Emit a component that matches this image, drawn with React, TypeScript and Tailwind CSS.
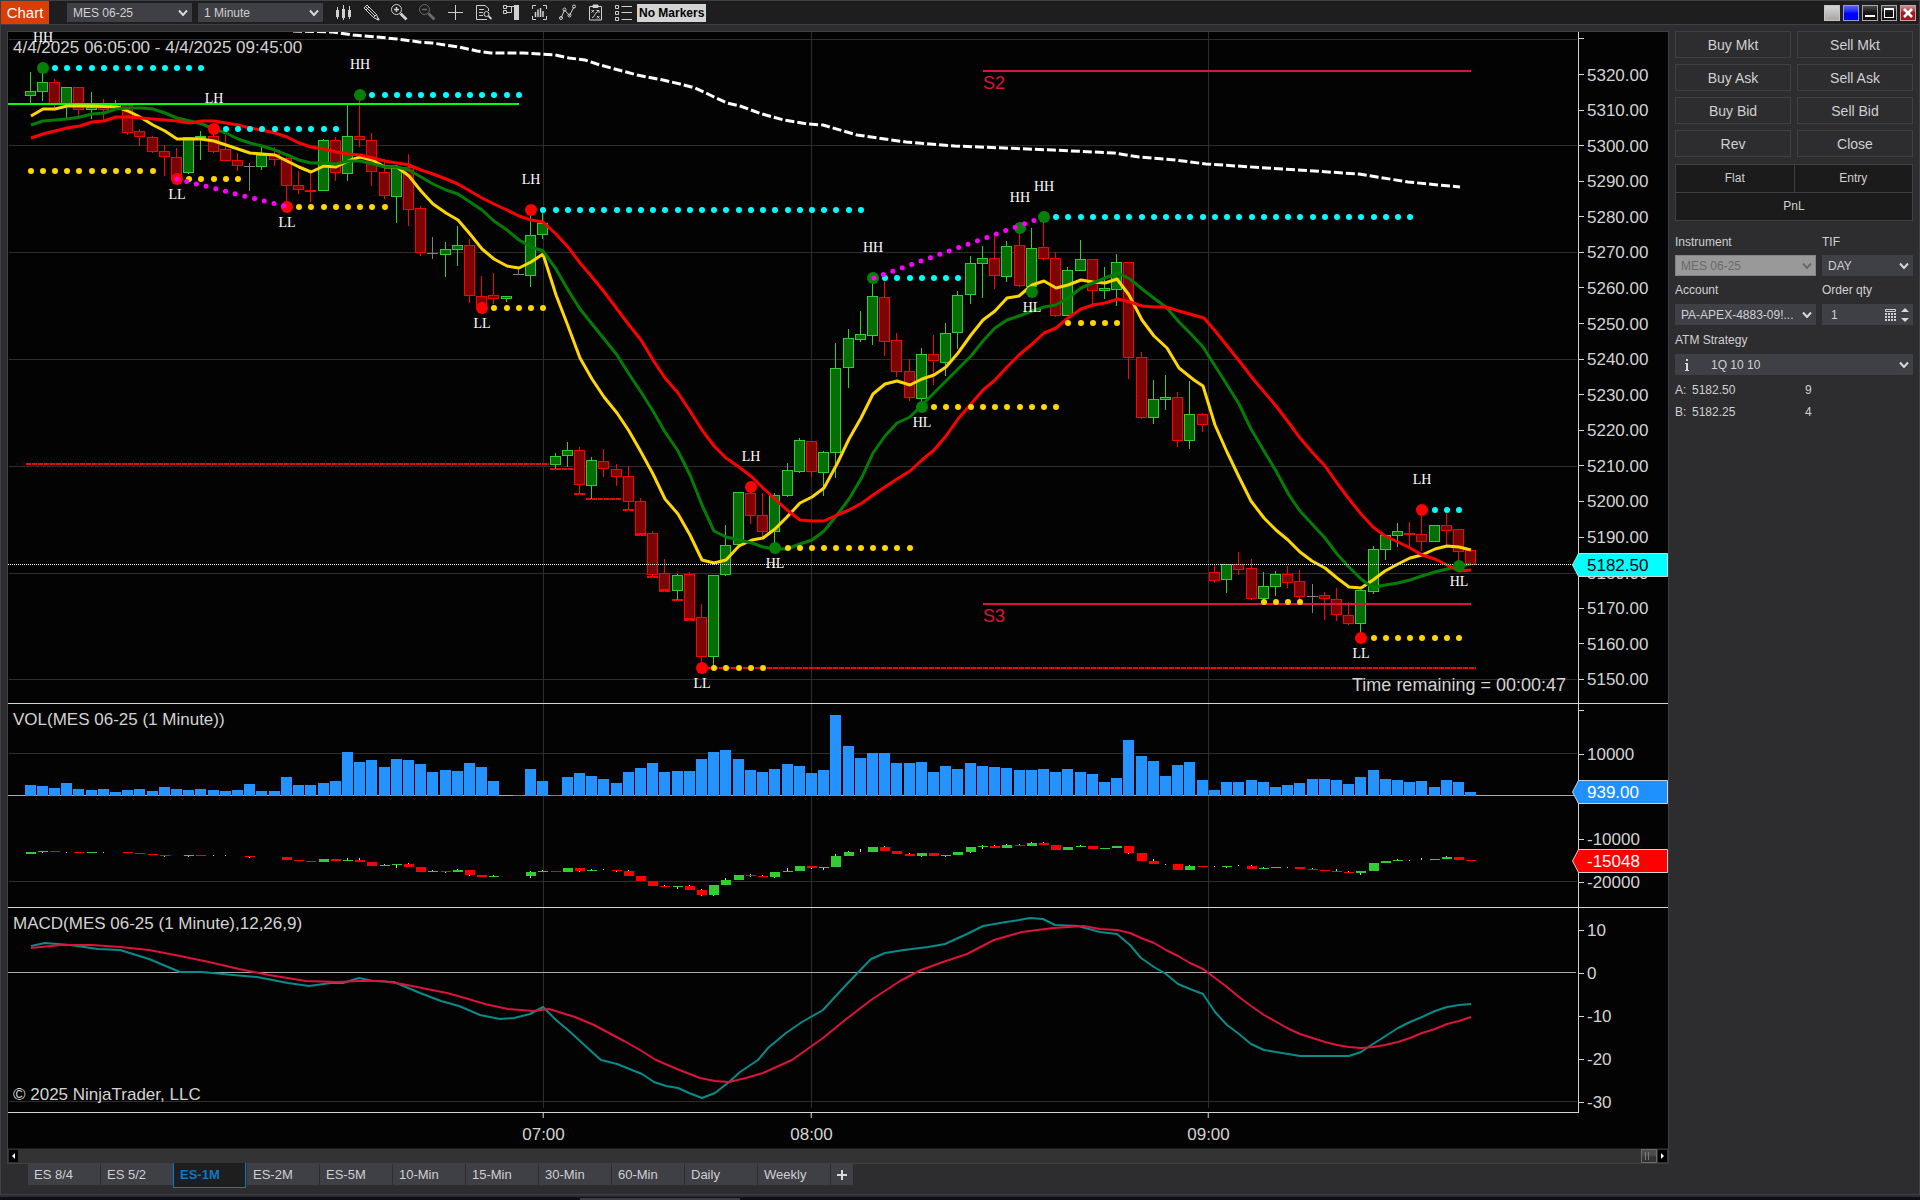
import type { ReactNode } from 'react';

type Candle = [number, 'G' | 'R' | 'D', number, number, number, number];

/* Plot geometry shared by the three stacked panels. */
const PLOT_LEFT = 8;
const PLOT_WIDTH = 1570;
const barX = (i: number) => Math.floor(30 + 12.21 * i);

const UP = '#32cd32';
const DOWN = '#ff0000';
const GRID = '#2d2d2d';
const TIME_LINES = [543, 811, 1208];

/* index, direction, high, body top, body bottom, low */
const CANDLES: Candle[] = [
  [0, 'G', 72, 91, 96, 103], [1, 'G', 68, 82, 92, 101], [2, 'R', 79, 82, 104, 111], [3, 'G', 87, 87, 104, 120],
  [4, 'R', 87, 87, 110, 119], [5, 'G', 92, 107, 110, 119], [6, 'R', 99, 106, 110, 122], [7, 'G', 100, 104, 107, 110],
  [8, 'R', 105, 105, 133, 135], [9, 'R', 129, 131, 137, 146], [10, 'R', 136, 137, 152, 153], [11, 'R', 145, 151, 157, 176],
  [12, 'R', 148, 157, 179, 179], [13, 'G', 137, 137, 173, 174], [14, 'G', 131, 136, 138, 160], [15, 'R', 133, 136, 152, 153],
  [16, 'R', 135, 149, 161, 161], [17, 'R', 153, 160, 166, 171], [18, 'D', 163, 166, 167, 191], [19, 'G', 147, 155, 167, 170],
  [20, 'R', 147, 154, 160, 166], [21, 'R', 157, 158, 186, 206], [22, 'R', 171, 185, 190, 194], [23, 'R', 173, 190, 192, 202],
  [24, 'G', 139, 140, 191, 191], [25, 'R', 137, 140, 173, 181], [26, 'G', 104, 136, 174, 181], [27, 'R', 98, 136, 140, 147],
  [28, 'R', 133, 140, 172, 186], [29, 'R', 159, 172, 196, 199], [30, 'G', 165, 167, 197, 223], [31, 'R', 154, 167, 210, 226],
  [32, 'R', 206, 208, 253, 256], [33, 'D', 237, 253, 254, 259], [34, 'G', 242, 249, 255, 277], [35, 'G', 226, 245, 250, 266],
  [36, 'R', 239, 245, 296, 303], [37, 'R', 276, 296, 306, 307], [38, 'R', 273, 295, 299, 304], [39, 'G', 296, 296, 299, 302],
  [40, 'D', 268, 274, 275, 275], [41, 'G', 212, 235, 276, 287], [42, 'G', 212, 223, 235, 239], [43, 'G', 453, 456, 465, 469],
  [44, 'G', 442, 450, 456, 467], [45, 'R', 447, 450, 485, 494], [46, 'G', 457, 460, 486, 499], [47, 'R', 449, 461, 469, 477],
  [48, 'R', 464, 469, 477, 486], [49, 'R', 466, 476, 502, 510], [50, 'R', 498, 501, 534, 535], [51, 'R', 531, 533, 575, 577],
  [52, 'R', 559, 573, 590, 591], [53, 'G', 574, 575, 591, 600], [54, 'R', 572, 574, 619, 620], [55, 'R', 604, 617, 657, 668],
  [56, 'G', 575, 575, 657, 667], [57, 'G', 525, 545, 575, 576], [58, 'G', 492, 492, 545, 545], [59, 'R', 487, 493, 516, 524],
  [60, 'R', 493, 515, 532, 537], [61, 'G', 493, 495, 532, 548], [62, 'G', 463, 470, 496, 497], [63, 'G', 438, 440, 472, 473],
  [64, 'R', 441, 441, 472, 477], [65, 'G', 451, 452, 473, 496], [66, 'G', 343, 368, 453, 478], [67, 'G', 329, 338, 368, 388],
  [68, 'G', 311, 334, 340, 342], [69, 'G', 278, 296, 336, 345], [70, 'R', 280, 297, 342, 356], [71, 'R', 333, 340, 372, 377],
  [72, 'R', 359, 371, 398, 401], [73, 'G', 348, 354, 399, 406], [74, 'R', 335, 354, 361, 385], [75, 'G', 323, 333, 363, 376],
  [76, 'G', 291, 295, 333, 349], [77, 'G', 256, 263, 295, 304], [78, 'G', 246, 258, 264, 298], [79, 'R', 236, 258, 276, 289],
  [80, 'G', 241, 246, 277, 282], [81, 'R', 230, 245, 286, 287], [82, 'G', 228, 248, 287, 290], [83, 'R', 220, 247, 259, 260],
  [84, 'R', 252, 258, 316, 317], [85, 'G', 267, 270, 316, 316], [86, 'G', 240, 259, 271, 271], [87, 'R', 259, 259, 291, 304],
  [88, 'G', 267, 288, 291, 299], [89, 'G', 254, 262, 290, 306], [90, 'R', 262, 262, 358, 379], [91, 'R', 352, 357, 418, 419],
  [92, 'G', 380, 399, 418, 424], [93, 'G', 375, 397, 400, 410], [94, 'R', 392, 397, 441, 447], [95, 'G', 381, 414, 441, 449],
  [96, 'R', 413, 414, 425, 432], [97, 'R', 565, 572, 581, 583], [98, 'G', 564, 564, 580, 593], [99, 'R', 552, 564, 570, 575],
  [100, 'R', 559, 568, 599, 600], [101, 'G', 572, 586, 599, 602], [102, 'G', 571, 574, 587, 596], [103, 'R', 566, 574, 583, 588],
  [104, 'R', 570, 581, 597, 601], [105, 'D', 584, 596, 597, 613], [106, 'R', 592, 595, 599, 620], [107, 'R', 588, 599, 615, 621],
  [108, 'R', 602, 615, 624, 625], [109, 'G', 590, 590, 624, 633], [110, 'G', 546, 549, 592, 594], [111, 'G', 535, 535, 550, 560],
  [112, 'G', 523, 531, 536, 547], [113, 'R', 522, 533, 535, 547], [114, 'R', 510, 534, 542, 551], [115, 'G', 525, 525, 542, 542],
  [116, 'R', 513, 525, 531, 547], [117, 'R', 529, 529, 552, 567], [118, 'R', 550, 550, 565, 565],
];

const VOLUME = [
  11, 10, 8, 13, 7, 6, 7, 4, 6, 7, 5, 9, 7, 6, 7, 6, 5, 6, 12, 5, 5, 19, 11, 11, 13, 15, 44, 34, 36, 29,
  37, 36, 32, 24, 26, 25, 33, 29, 15, 0, 1, 27, 15, 1, 19, 23, 20, 17, 13, 24, 28, 33, 24, 25, 25, 37, 44, 46, 37, 26,
  24, 27, 32, 30, 23, 26, 81, 50, 38, 43, 43, 33, 33, 34, 24, 30, 27, 33, 30, 29, 28, 26, 26, 27, 24, 27, 24, 22, 14, 18,
  56, 40, 35, 20, 31, 34, 16, 6, 14, 14, 16, 14, 9, 11, 13, 17, 17, 16, 12, 19, 26, 17, 16, 14, 15, 9, 16, 14, 4,
];

/* index, direction, high, body top, body bottom, low */
const DELTA: Candle[] = [
  [0, 'G', 852, 852, 854, 854], [1, 'G', 851, 851, 852, 853], [2, 'R', 851, 851, 852, 852], [3, 'D', 852, 0, 0, 853],
  [4, 'R', 852, 852, 853, 853], [5, 'G', 852, 852, 853, 853], [6, 'D', 852, 0, 0, 853], [8, 'R', 852, 852, 853, 853],
  [9, 'R', 853, 853, 854, 854], [10, 'R', 854, 854, 855, 855], [11, 'R', 855, 855, 856, 857], [13, 'G', 855, 855, 856, 857],
  [14, 'R', 855, 855, 856, 856], [15, 'D', 855, 0, 0, 856], [16, 'D', 855, 0, 0, 856], [18, 'R', 856, 856, 857, 858],
  [21, 'R', 857, 857, 860, 860], [22, 'R', 860, 860, 861, 861], [23, 'R', 861, 861, 862, 862], [24, 'G', 859, 859, 862, 862],
  [25, 'R', 859, 859, 861, 861], [26, 'G', 858, 860, 861, 861], [27, 'R', 858, 860, 862, 862], [28, 'R', 862, 862, 866, 866],
  [29, 'G', 864, 865, 866, 866], [30, 'G', 864, 864, 865, 868], [31, 'R', 863, 864, 867, 867], [32, 'R', 867, 867, 872, 872],
  [33, 'G', 870, 871, 872, 872], [34, 'R', 871, 871, 872, 873], [35, 'G', 869, 870, 872, 872], [36, 'R', 870, 870, 875, 876],
  [37, 'R', 875, 875, 877, 877], [38, 'G', 875, 876, 877, 877], [41, 'G', 871, 872, 876, 878], [42, 'G', 870, 871, 872, 872],
  [43, 'R', 871, 871, 872, 872], [44, 'G', 868, 868, 872, 872], [45, 'R', 868, 868, 871, 872], [46, 'G', 869, 870, 871, 871],
  [47, 'D', 869, 0, 0, 870], [48, 'R', 870, 870, 871, 872], [49, 'R', 870, 871, 876, 876], [50, 'R', 876, 876, 881, 881],
  [51, 'R', 881, 881, 886, 886], [52, 'R', 885, 886, 887, 887], [53, 'G', 886, 886, 887, 889], [54, 'R', 885, 886, 890, 890],
  [55, 'R', 889, 890, 895, 896], [56, 'G', 885, 885, 895, 896], [57, 'G', 878, 880, 885, 885], [58, 'G', 875, 875, 880, 880],
  [59, 'R', 874, 875, 876, 877], [60, 'R', 875, 876, 877, 877], [61, 'G', 872, 872, 877, 878], [62, 'G', 868, 871, 872, 872],
  [63, 'G', 866, 866, 871, 871], [64, 'R', 866, 866, 868, 869], [65, 'G', 867, 867, 868, 870], [66, 'G', 854, 856, 867, 867],
  [67, 'G', 851, 852, 856, 856], [68, 'D', 849, 0, 0, 852], [69, 'G', 847, 847, 852, 852], [70, 'R', 846, 847, 851, 851],
  [71, 'R', 851, 851, 854, 854], [72, 'R', 853, 854, 856, 856], [73, 'G', 853, 853, 856, 857], [74, 'R', 853, 853, 856, 856],
  [75, 'G', 855, 855, 856, 857], [76, 'G', 852, 852, 855, 855], [77, 'G', 847, 847, 852, 853], [78, 'G', 845, 846, 847, 849],
  [79, 'R', 845, 846, 848, 848], [80, 'G', 844, 845, 848, 848], [81, 'R', 844, 845, 846, 846], [82, 'G', 842, 843, 846, 846],
  [83, 'R', 842, 843, 845, 845], [84, 'R', 845, 845, 850, 850], [85, 'G', 847, 847, 850, 850], [86, 'G', 845, 846, 847, 847],
  [87, 'R', 846, 846, 849, 849], [88, 'G', 848, 848, 849, 849], [89, 'G', 846, 846, 848, 848], [90, 'R', 846, 846, 853, 854],
  [91, 'R', 853, 853, 861, 861], [92, 'R', 859, 861, 864, 864], [93, 'D', 864, 0, 0, 865], [94, 'R', 864, 864, 870, 870],
  [95, 'G', 865, 866, 870, 870], [96, 'R', 866, 866, 867, 867], [97, 'D', 866, 0, 0, 867], [98, 'G', 866, 866, 867, 868],
  [99, 'D', 865, 0, 0, 866], [100, 'R', 865, 866, 869, 869], [101, 'G', 867, 868, 869, 869], [102, 'G', 867, 867, 868, 868],
  [103, 'D', 867, 0, 0, 868], [104, 'R', 867, 867, 869, 869], [105, 'R', 868, 869, 870, 870], [106, 'R', 870, 870, 871, 871],
  [107, 'R', 869, 871, 872, 872], [108, 'R', 871, 872, 873, 873], [109, 'G', 871, 871, 873, 875], [110, 'G', 863, 863, 871, 871],
  [111, 'G', 861, 861, 863, 863], [112, 'G', 859, 860, 861, 861], [113, 'D', 860, 0, 0, 861], [114, 'D', 858, 0, 0, 860],
  [115, 'G', 859, 859, 860, 860], [116, 'G', 856, 857, 859, 859], [117, 'R', 857, 857, 860, 860], [118, 'R', 860, 860, 861, 861],
];

const FAST_MA =
  '31,116 43,109 55,109 67,106 91,106 117,107 128,111 140,117 153,125 165,131 177,139 189,139 201,139 214,141 226,145 238,149 250,153 262,154 275,155 287,161 299,167 311,172 324,166 336,167 348,161 360,157 372,160 385,167 397,167 409,176 421,191 433,204 446,213 458,220 470,234 482,249 494,259 507,266 519,268 531,262 543,254 556,295 568,326 580,358 592,379 604,397 617,413 629,431 641,452 653,474 665,499 678,514 690,535 702,560 714,563 726,560 739,546 752,540 763,538 775,529 787,517 800,503 812,497 824,488 837,464 849,439 861,418 873,394 885,384 897,381 910,385 922,379 934,375 946,367 958,353 971,335 983,320 995,311 1007,298 1019,296 1032,285 1044,281 1056,288 1068,285 1081,280 1093,282 1105,283 1117,279 1129,295 1142,320 1154,336 1167,348 1179,368 1194,380 1203,386 1215,425 1227,452 1239,477 1251,501 1264,518 1276,530 1288,540 1300,552 1312,561 1325,568 1337,578 1349,587 1361,588 1373,580 1385,571 1398,564 1410,558 1422,555 1435,549 1447,546 1459,547 1471,550';
const MID_MA =
  '31,125 43,121 67,119 80,117 92,114 104,113 116,109 128,108 140,108 153,109 165,113 177,118 190,121 202,124 214,129 226,133 238,139 250,143 262,146 275,150 287,155 299,160 311,163 324,163 336,164 348,161 360,161 373,164 385,167 397,167 409,170 421,177 433,184 446,190 458,194 470,202 482,210 494,221 507,230 519,240 531,247 543,251 556,269 568,290 580,309 592,324 605,340 617,355 629,374 641,392 653,411 665,432 678,451 690,475 702,505 714,531 726,537 739,540 752,543 763,547 775,549 787,549 800,544 812,540 824,531 837,515 849,499 862,477 873,453 885,436 897,423 910,417 922,405 934,393 946,381 958,369 971,356 983,341 995,328 1007,320 1019,316 1032,311 1044,307 1056,305 1068,298 1081,288 1093,283 1105,278 1118,273 1130,279 1142,289 1155,299 1166,307 1179,322 1191,334 1203,347 1224,380 1239,404 1251,429 1264,451 1276,471 1289,495 1300,511 1312,524 1325,538 1337,554 1349,567 1361,579 1373,588 1385,585 1398,583 1410,580 1422,576 1435,572 1447,569 1459,566 1471,564';
const SLOW_MA =
  '31,138 43,134 55,131 67,128 80,126 92,122 104,121 116,117 128,117 153,119 177,121 189,123 202,121 214,121 226,123 238,125 250,128 262,130 275,133 287,137 299,143 311,147 324,149 336,152 348,154 360,155 373,158 385,161 409,165 421,170 433,174 446,179 458,184 470,191 482,198 494,204 507,210 519,216 531,220 543,222 556,234 568,247 580,263 592,277 605,293 617,309 629,325 641,340 653,360 665,378 678,393 690,411 702,430 714,446 726,458 739,467 752,477 763,488 775,499 787,510 800,520 812,521 824,521 837,515 849,510 862,503 873,495 885,487 897,479 910,471 922,460 934,450 946,436 958,419 971,404 983,390 995,380 1007,367 1019,355 1032,344 1044,333 1056,328 1068,318 1081,309 1093,305 1105,303 1118,299 1130,302 1142,306 1154,307 1166,307 1179,311 1204,318 1216,332 1228,347 1240,362 1254,380 1276,406 1289,423 1300,438 1312,452 1325,466 1337,483 1349,499 1361,514 1373,527 1385,536 1398,542 1410,548 1422,555 1435,559 1447,565 1459,571 1471,570';
const LONG_MA =
  '293,31 333,32 353,35 377,37 397,39 419,42 432,43 459,47 477,51 491,53 523,53 555,55 569,58 585,60 600,65 637,75 663,80 680,84 695,88 710,95 727,103 740,106 762,114 784,120 808,124 823,125 857,135 906,142 955,146 1004,148 1053,150 1114,153 1139,157 1175,160 1206,164 1298,170 1359,174 1408,182 1460,187';
const MACD =
  '31,946 45,943 70,945 98,949 120,950 149,959 180,972 202,972 233,975 257,977 288,983 309,986 331,983 343,983 359,978 373,981 394,982 420,993 441,1001 459,1006 480,1015 500,1019 514,1018 530,1014 543,1007 556,1020 568,1030 580,1041 592,1052 601,1060 617,1064 642,1074 654,1082 666,1086 678,1088 689,1093 702,1098 715,1093 729,1082 740,1072 758,1060 768,1048 786,1033 802,1022 823,1010 845,986 871,959 885,953 904,950 928,947 945,944 967,934 983,926 1006,922 1019,920 1030,918 1043,919 1055,925 1078,926 1100,932 1117,934 1130,945 1141,958 1154,967 1166,974 1178,984 1190,989 1203,994 1215,1012 1227,1025 1239,1034 1251,1044 1264,1050 1300,1056 1349,1056 1361,1052 1373,1044 1398,1028 1410,1022 1422,1017 1435,1011 1447,1007 1459,1005 1471,1004';
const SIGNAL =
  '31,948 61,945 92,945 120,947 149,950 180,956 209,962 239,969 269,975 306,981 337,982 359,981 382,981 402,984 422,988 447,993 465,998 485,1004 508,1009 533,1011 549,1009 575,1017 594,1025 624,1041 640,1050 656,1060 677,1069 700,1078 715,1081 729,1082 746,1078 763,1073 792,1060 823,1038 845,1020 871,1000 900,981 921,970 943,962 967,954 994,940 1022,932 1053,928 1084,926 1100,929 1117,930 1130,933 1141,938 1154,943 1166,950 1178,956 1190,963 1203,969 1215,978 1227,987 1239,997 1251,1006 1264,1015 1289,1029 1300,1034 1325,1042 1337,1045 1349,1047 1361,1048 1373,1047 1385,1045 1398,1042 1410,1038 1422,1033 1435,1029 1447,1024 1459,1021 1471,1017';

/* first bar, last bar, y, colour */
const DOT_ROWS: [number, number, number, string][] = [
  [2, 14, 68, '#00ffff'], [0, 10, 171, '#ffd700'], [16, 25, 129, '#00ffff'], [13, 17, 179, '#ffd700'],
  [22, 29, 207, '#ffd700'], [28, 40, 95, '#00ffff'], [38, 42, 308, '#ffd700'], [42, 68, 210, '#00ffff'],
  [62, 72, 548, '#ffd700'], [56, 60, 668, '#ffd700'], [70, 76, 278, '#00ffff'], [74, 84, 407, '#ffd700'],
  [84, 113, 217, '#00ffff'], [85, 89, 323, '#ffd700'], [101, 104, 602, '#ffd700'], [115, 117, 510, '#00ffff'],
  [110, 117, 638, '#ffd700'],
];

/* bar, dot y, label y, label */
const SWINGS: [number, number, number, string, 'G' | 'R'][] = [
  [1, 68, 38, 'HH', 'G'], [15, 129, 99, 'LH', 'R'], [12, 179, 195, 'LL', 'R'], [21, 207, 223, 'LL', 'R'],
  [27, 95, 65, 'HH', 'G'], [37, 308, 324, 'LL', 'R'], [41, 210, 180, 'LH', 'R'], [55, 668, 684, 'LL', 'R'],
  [59, 487, 457, 'LH', 'R'], [61, 548, 564, 'HL', 'G'], [69, 278, 248, 'HH', 'G'], [73, 407, 423, 'HL', 'G'],
  [81, 228, 198, 'HH', 'G'], [82, 292, 308, 'HL', 'G'], [83, 217, 187, 'HH', 'G'], [109, 638, 654, 'LL', 'R'],
  [114, 510, 480, 'LH', 'R'], [117, 566, 582, 'HL', 'G'],
];

/* x start, x end, y of the running session low */
const LOW_STEPS: [number, number, number][] = [
  [26, 549, 464], [550, 573, 469], [574, 585, 494], [586, 622, 499], [623, 634, 510], [635, 646, 535],
  [647, 658, 577], [659, 670, 591], [672, 683, 600], [684, 695, 620], [701, 1476, 668],
];

const PRICES = Array.from({ length: 18 }, (_, k) => 5320 - k * 10);
const priceY = (p: number) => 74.5 + (5320 - p) * 3.558;

const pct = (v: number, from: number, size: number) => `${((v - from) / size) * 100}%`;

type PanelProps = {
  top: number;
  height: number;
  name: string;
  ticks: { y: number; label?: string }[];
  overlay?: ReactNode;
  tags?: ReactNode;
  children: ReactNode;
};

function Panel({ top, height, name, ticks, overlay, tags, children }: PanelProps) {
  return (
    <section className="flex min-h-0" aria-label={name}>
      <div className="relative min-w-0 flex-1 overflow-hidden">
        <svg
          className="block h-full w-full"
          viewBox={`${PLOT_LEFT} ${top} ${PLOT_WIDTH} ${height}`}
          preserveAspectRatio="none"
          role="img"
          aria-label={name}
        >
          {children}
        </svg>
        {overlay}
      </div>
      <div className="relative w-[90px] shrink-0 border-l border-[#d3d3d3] text-[17px] leading-5 text-[#d3d3d3]">
        {ticks.map((t) => (
          <div
            key={t.y}
            className="absolute left-0 flex -translate-y-1/2 items-center"
            style={{ top: pct(t.y, top, height) }}
          >
            <span className="h-px w-[5px] bg-[#d3d3d3]" />
            <span className="mt-0.5 ml-[3px] h-5">{t.label}</span>
          </div>
        ))}
        {tags}
      </div>
    </section>
  );
}

function PriceTag({ top, fill, text, className }: { top: string; fill: string; text: string; className: string }) {
  return (
    <div className="absolute -left-[7px] right-0 h-6 -translate-y-1/2" style={{ top }}>
      <svg className="block h-6 w-full" viewBox="0 0 96 24" preserveAspectRatio="none">
        <path d="M0.5 12 6.5 0.5H95.5V23.5H6.5Z" fill={fill} stroke="#d3d3d3" />
      </svg>
      <span className={className}>{text}</span>
    </div>
  );
}

function VerticalGrid({ y1, y2 }: { y1: number; y2: number }) {
  return (
    <>
      {TIME_LINES.map((x) => (
        <rect key={x} x={x} y={y1} width="1" height={y2 - y1} fill={GRID} />
      ))}
    </>
  );
}

function PricePanel() {
  const top = 32;
  const height = 671;
  return (
    <Panel
      top={top}
      height={height}
      name="MES 06-25 price"
      ticks={[{ y: 39 }, ...PRICES.map((p) => ({ y: priceY(p), label: p.toFixed(2) }))]}
      tags={
        <PriceTag
          top={pct(565, top, height)}
          fill="#00ffff"
          text="5182.50"
          className="absolute left-[15px] top-[3px] text-black"
        />
      }
      overlay={
        <>
          <p className="absolute left-[5px] top-1.5 text-[17px] leading-5 text-[#d3d3d3]">
            4/4/2025 06:05:00 - 4/4/2025 09:45:00
          </p>
          <p className="absolute bottom-2 right-3 text-lg leading-5 text-[#d3d3d3]">Time remaining = 00:00:47</p>
          {[
            ['S2', 83],
            ['S3', 616],
          ].map(([t, y]) => (
            <span
              key={t}
              className="absolute -translate-y-1/2 text-lg leading-5 text-[#dc143c]"
              style={{ left: pct(983, PLOT_LEFT, PLOT_WIDTH), top: pct(Number(y), top, height) }}
            >
              {t}
            </span>
          ))}
          {SWINGS.map(([i, , y, label]) => (
            <span
              key={i}
              className="absolute -translate-x-1/2 -translate-y-1/2 font-['Liberation_Serif',serif] text-sm leading-4 text-white"
              style={{ left: pct(barX(i) + 1, PLOT_LEFT, PLOT_WIDTH), top: pct(y, top, height) }}
            >
              {label}
            </span>
          ))}
        </>
      }
    >
      {[39, 145, 252, 359, 466, 573, 679].map((y) => (
        <rect key={y} x="9" y={y} width="1568" height="1" fill={GRID} />
      ))}
      <VerticalGrid y1={32} y2={703} />
      {CANDLES.map(([i, kind, high, t, b, low]) => {
        const x = barX(i);
        const line = kind === 'G' ? UP : kind === 'R' ? DOWN : '#808080';
        const fill = kind === 'G' ? '#066e06' : '#7b0404';
        return (
          <g key={i}>
            <rect x={x} y={high} width="1" height={Math.max(low - high, 1)} fill={line} />
            {b - t > 2 ? (
              <rect x={x - 4.5} y={t + 0.5} width="10" height={b - t - 1} fill={fill} stroke={line} />
            ) : (
              <rect x={x - 5} y={t} width="11" height={b - t} fill={line} />
            )}
          </g>
        );
      })}
      {LOW_STEPS.map(([x1, x2, y]) => (
        <line key={y} x1={x1} x2={x2} y1={y} y2={y} stroke={DOWN} strokeWidth="2" strokeDasharray="5 1" />
      ))}
      <rect x="8" y="103" width="511" height="2" fill="#00ff00" />
      <polyline points={LONG_MA} fill="none" stroke="#fff" strokeWidth="3" strokeDasharray="9 3" />
      <polyline points={FAST_MA} fill="none" stroke="#ffd700" strokeWidth="3" strokeLinejoin="round" />
      <polyline points={MID_MA} fill="none" stroke="#047d04" strokeWidth="3" strokeLinejoin="round" />
      <polyline points={SLOW_MA} fill="none" stroke="#ff0000" strokeWidth="3" strokeLinejoin="round" />
      <rect x="983" y="70" width="488" height="2" fill="#dc143c" />
      <rect x="983" y="603" width="488" height="2" fill="#dc143c" />
      <line x1="8" x2="1573" y1="564.5" y2="564.5" stroke="#fff" strokeDasharray="1 1" />
      {DOT_ROWS.map(([from, to, y, color]) =>
        Array.from({ length: to - from + 1 }, (_, k) => (
          <circle key={`${y}-${from + k}`} cx={barX(from + k) + 1} cy={y} r="3" fill={color} />
        )),
      )}
      {SWINGS.map(([i, y, , , kind]) => (
        <circle key={i} cx={barX(i) + 1} cy={y} r="6" fill={kind === 'G' ? '#067f06' : DOWN} />
      ))}
      <g fill="none" stroke="#ff00ff" strokeWidth="5" strokeLinecap="round" strokeDasharray="0 10">
        <path d="M177 179 284 206" />
        <path d="M874 278 1038 219" />
      </g>
    </Panel>
  );
}

function VolumePanel() {
  const top = 704;
  const height = 203;
  return (
    <Panel
      top={top}
      height={height}
      name="Volume"
      ticks={[{ y: 710 }, { y: 754, label: '10000' }, { y: 839, label: '-10000' }, { y: 882, label: '-20000' }]}
      tags={
        <>
          <PriceTag
            top={pct(792, top, height)}
            fill="#1e90ff"
            text="939.00"
            className="absolute left-[15px] top-[3px] text-white"
          />
          <PriceTag
            top={pct(861, top, height)}
            fill="#ff0000"
            text="-15048"
            className="absolute left-[15px] top-[3px] text-white"
          />
        </>
      }
      overlay={
        <p className="absolute left-[5px] top-1.5 text-[17px] leading-5 text-[#d3d3d3]">VOL(MES 06-25 (1 Minute))</p>
      }
    >
      <rect x="9" y="753" width="1568" height="1" fill={GRID} />
      <rect x="9" y="881" width="1568" height="1" fill={GRID} />
      <VerticalGrid y1={704} y2={907} />
      <rect x="8" y="795" width="1569" height="1" fill="#a9a9a9" />
      {VOLUME.map((h, i) => (
        <rect key={i} x={barX(i) - 5} y={796 - h} width="11" height={h} fill="#2492ff" />
      ))}
      {DELTA.map(([i, kind, high, t, b, low]) => (
        <g key={i}>
          <rect x={barX(i)} y={high} width="1" height={low - high} fill="#d3d3d3" />
          {b > t && <rect x={barX(i) - 4} y={t} width="10" height={b - t} fill={kind === 'G' ? UP : DOWN} />}
        </g>
      ))}
    </Panel>
  );
}

function MacdPanel() {
  return (
    <Panel
      top={908}
      height={204}
      name="MACD"
      ticks={[
        { y: 930, label: '10' },
        { y: 973, label: '0' },
        { y: 1016, label: '-10' },
        { y: 1059, label: '-20' },
        { y: 1102, label: '-30' },
      ]}
      overlay={
        <>
          <p className="absolute left-[5px] top-1.5 text-[17px] leading-5 text-[#d3d3d3]">
            MACD(MES 06-25 (1 Minute),12,26,9)
          </p>
          <p className="absolute bottom-[7px] left-[5px] text-[17px] leading-5 text-[#d3d3d3]">
            © 2025 NinjaTrader, LLC
          </p>
        </>
      }
    >
      <rect x="9" y="1101" width="1568" height="1" fill={GRID} />
      <VerticalGrid y1={908} y2={1108} />
      <rect x="8" y="972" width="1568" height="1" fill="#a9a9a9" />
      <polyline points={MACD} fill="none" stroke="#078b8b" strokeWidth="2" strokeLinejoin="round" />
      <polyline points={SIGNAL} fill="none" stroke="#dc143c" strokeWidth="2" strokeLinejoin="round" />
    </Panel>
  );
}

function TimeAxis() {
  const labels: [string, number][] = [
    ['07:00', 543],
    ['08:00', 811],
    ['09:00', 1208],
  ];
  return (
    <div className="relative mr-[90px] text-[17px] leading-5 text-[#d3d3d3]">
      {labels.map(([t, x]) => (
        <div
          key={t}
          className="absolute top-0 flex -translate-x-1/2 flex-col items-center gap-[7px]"
          style={{ left: pct(x + 0.5, PLOT_LEFT, PLOT_WIDTH) }}
        >
          <span className="h-[5px] w-px bg-[#d3d3d3]" />
          <span>{t}</span>
        </div>
      ))}
    </div>
  );
}

function ScrollStrip() {
  return (
    <div className="flex items-center border-t border-[#1c1c1c] bg-[#333333] px-px">
      <button type="button" aria-label="Scroll left" className="grid h-3 w-[9px] place-items-center bg-black">
        <svg width="5" height="6" viewBox="0 0 5 6">
          <path d="M4 0v6L1 3z" fill="#fff" />
        </svg>
      </button>
      <div className="flex-1" />
      <div className="mr-px flex h-3.5 w-4 items-center gap-0.5 border border-[#6a6a6a] bg-gradient-to-b from-[#4c4c4c] from-40% to-[#333] to-60% pl-[3px]">
        <span className="h-2 w-px bg-[#7a7a7a]" />
        <span className="h-2 w-px bg-[#7a7a7a]" />
      </div>
      <button type="button" aria-label="Scroll right" className="grid h-3 w-[9px] place-items-center bg-black">
        <svg width="5" height="6" viewBox="0 0 5 6">
          <path d="M1 0v6l3-3z" fill="#fff" />
        </svg>
      </button>
    </div>
  );
}

function Chevron({ color = '#d8d8d8' }: { color?: string }) {
  return (
    <svg
      className="pointer-events-none absolute right-1 top-1/2 h-[7px] w-2.5 -translate-y-1/2"
      viewBox="0 0 10 7"
      fill="none"
      stroke={color}
      strokeWidth="2"
    >
      <path d="M1 1l4 4.4L9 1" />
    </svg>
  );
}

function ToolbarSelect({ label, value, className }: { label: string; value: string; className: string }) {
  return (
    <div className={className}>
      <select
        aria-label={label}
        className="block h-[19px] w-full appearance-none bg-[#3f3f46] pl-1.5 text-xs text-[#d0d0d0]"
      >
        <option>{value}</option>
      </select>
      <Chevron />
    </div>
  );
}

const TOOLS: { name: string; dim?: boolean; icon: ReactNode }[] = [
  {
    name: 'Chart style',
    icon: (
      <>
        <path d="M4.5 5v12M10.5 3v15M16.5 4v13" />
        <path d="M3 8h3v7H3zM9 7h3v9H9zM15 8h3v7h-3z" fill="currentColor" stroke="none" />
      </>
    ),
  },
  {
    name: 'Drawing tools',
    icon: (
      <>
        <path d="M3 6L6 3l9.500 9.500-3 3z" />
        <path d="M4.500 4.500l9.500 9.500" />
        <path d="M5 8l3-3M12.500 15.500l5 2.500-2-5.500" />
        <path d="M16 17.500l2 .5-.5-2z" fill="currentColor" />
      </>
    ),
  },
  {
    name: 'Zoom in',
    icon: (
      <>
        <circle cx="7.500" cy="7.500" r="5" />
        <path d="M7.500 5v5M5 7.500h5" strokeWidth="1.500" />
        <path d="M11.500 11.500l6 6" strokeWidth="2.800" />
      </>
    ),
  },
  {
    name: 'Zoom out',
    dim: true,
    icon: (
      <>
        <circle cx="7.500" cy="7.500" r="5" />
        <path d="M5 7.500h5" strokeWidth="1.500" />
        <path d="M11.500 11.500l6 6" strokeWidth="2.800" />
      </>
    ),
  },
  { name: 'Crosshair', icon: <path d="M10.500 3v15M3 10.500h15" /> },
  {
    name: 'Data box',
    icon: (
      <>
        <path d="M15.500 9V6.500L12 3.500H3.500v14h10.500" />
        <path d="M6 7.500h5M6 10.500h4M6 13.500h4" />
        <circle cx="13.500" cy="12" r="2.500" />
        <path d="M15.500 14l3 3" strokeWidth="1.800" />
      </>
    ),
  },
  {
    name: 'Chart trader',
    icon: (
      <>
        <path d="M13 3h5v15h-5z" fill="currentColor" stroke="none" />
        <path d="M2.500 3.500h3v3h-3zM2.500 8.500h3v3h-3zM5.500 4.500H13M5.500 10.500H10.500V4.500" />
      </>
    ),
  },
  {
    name: 'Data series',
    icon: (
      <>
        <path d="M3.500 7V3.500H7M14 3.500h3.500V7M3.500 14v3.500H7M14 17.500h3.500V14" />
        <path d="M6.500 10v5M9 7.500V15M11.500 6v9M14 9v6" strokeWidth="1.500" />
      </>
    ),
  },
  {
    name: 'Indicators',
    icon: (
      <>
        <path d="M4 16L7.500 8 12.500 13.500 17 5" />
        <circle cx="4" cy="16" r="1.500" />
        <circle cx="7.500" cy="7.500" r="1.500" />
        <circle cx="12.500" cy="13.500" r="1.500" />
        <circle cx="17" cy="4.500" r="1.500" />
      </>
    ),
  },
  {
    name: 'Strategies',
    icon: (
      <>
        <path d="M4.500 4.500h12v13.500h-12z" />
        <path d="M8 3h5v2.500H8z" fill="currentColor" />
        <path d="M6.500 8l2.500 2.500M9 8l-2.500 2.500M12 14l2.500 2.500M14.500 14L12 16.500M7 15.500c3 0 2-4 6.500-6.500M11.500 8.500H14V11" />
      </>
    ),
  },
  {
    name: 'Properties',
    icon: (
      <>
        <path d="M2.500 3.500h3v3h-3zM2.500 9.500h3v3h-3zM2.500 15.500h3v3h-3z" />
        <path d="M8.500 4.500H19M8.500 10.500H19M8.500 17.500H19" />
      </>
    ),
  },
];

function TitleBar() {
  return (
    <header className="flex h-6 shrink-0 items-center border-b border-[#3f3f46] bg-[#1e1e1e]">
      <h1 className="flex h-[23px] w-12 shrink-0 items-center justify-center bg-[#dc3c05] text-[15px] leading-5 text-white">
        Chart
      </h1>
      <ToolbarSelect label="Instrument" value="MES 06-25" className="relative ml-[18px] w-[125px]" />
      <ToolbarSelect label="Interval" value="1 Minute" className="relative ml-1.5 w-[125px]" />
      <nav className="ml-1.5 flex" aria-label="Chart tools">
        {TOOLS.map((t) => (
          <button
            key={t.name}
            type="button"
            title={t.name}
            className={
              t.dim
                ? 'grid h-[21px] w-7 place-items-center text-[#6b6b6b]'
                : 'grid h-[21px] w-7 place-items-center text-[#d0d0d0]'
            }
          >
            <svg width="21" height="21" viewBox="0 0 21 21" fill="none" stroke="currentColor">
              {t.icon}
            </svg>
          </button>
        ))}
      </nav>
      <button type="button" className="h-[18px] bg-[#d4d4d4] px-0.5 text-xs leading-[18px] font-bold text-black">
        No Markers
      </button>
      <div className="ml-auto flex gap-[3px] pr-[3px]">
        <button
          type="button"
          aria-label="Link interval"
          className="size-4 border border-[#c4c4c4] bg-gradient-to-b from-[#d5d5d5] to-[#aaa6a6]"
        />
        <button
          type="button"
          aria-label="Link instrument"
          className="size-4 border border-[#9a9ac8] bg-gradient-to-b from-[#5c5cff] to-[#0000ff] to-50%"
        />
        <button
          type="button"
          aria-label="Minimize"
          className="flex size-4 items-end justify-center border border-[#a8a8a8] bg-gradient-to-b from-[#4c4c4e] to-[#161214] to-50% pb-[3px]"
        >
          <span className="h-0.5 w-2.5 bg-white" />
        </button>
        <button
          type="button"
          aria-label="Maximize"
          className="grid size-4 place-items-center border border-[#a8a8a8] bg-gradient-to-b from-[#4c4c4e] to-[#161214] to-50%"
        >
          <span className="size-2.5 border border-t-2 border-white" />
        </button>
        <button
          type="button"
          aria-label="Close window"
          className="grid size-4 place-items-center border border-[#c9a0a4] bg-gradient-to-b from-[#d28a8e] to-[#a01722] to-50%"
        >
          <svg width="10" height="10" viewBox="0 0 10 10" stroke="#fff" strokeWidth="2.600">
            <path d="M1 1l8 8M9 1L1 9" />
          </svg>
        </button>
      </div>
    </header>
  );
}

const TABS = ['ES 8/4', 'ES 5/2', 'ES-1M', 'ES-2M', 'ES-5M', '10-Min', '15-Min', '30-Min', '60-Min', 'Daily', 'Weekly'];

function Tabs() {
  return (
    <nav className="flex h-[30px] shrink-0 items-start gap-px pl-[21px] text-[13px] text-[#d0d0d0]" aria-label="Chart tabs">
      {TABS.map((t) =>
        t === 'ES-1M' ? (
          <button
            key={t}
            type="button"
            aria-current="page"
            className="-mt-px -ml-px h-[25px] w-[73px] border border-t-0 border-[#1177c0] bg-[#1e1e1e] pl-1.5 text-left font-bold text-[#1077c4]"
          >
            {t}
          </button>
        ) : (
          <button key={t} type="button" className="h-[21px] w-[72px] bg-[#3f3f46] pl-1.5 text-left">
            {t}
          </button>
        ),
      )}
      <button type="button" aria-label="Add tab" className="grid h-[21px] w-[22px] place-items-center bg-[#3f3f46]">
        <svg width="10" height="10" viewBox="0 0 10 10" stroke="#d8d8d8" strokeWidth="2">
          <path d="M5 0v10M0 5h10" />
        </svg>
      </button>
    </nav>
  );
}

const ACTIONS = ['Buy Mkt', 'Sell Mkt', 'Buy Ask', 'Sell Ask', 'Buy Bid', 'Sell Bid', 'Rev', 'Close'];

function ChartTrader() {
  return (
    <aside className="w-[250px] shrink-0 px-1.5 pt-1.5 text-xs leading-4 text-[#d0d0d0]" aria-label="Chart trader">
      <div className="grid grid-cols-2 gap-1.5">
        {ACTIONS.map((a) => (
          <button key={a} type="button" className="h-[27px] border border-[#3f3f46] text-sm leading-5">
            {a}
          </button>
        ))}
      </div>

      <div className="mt-[7px] grid grid-cols-2 gap-px border border-[#3f3f46] bg-[#3f3f46] text-center leading-[27px]">
        <span className="bg-[#1b1b1c]">Flat</span>
        <span className="bg-[#1b1b1c]">Entry</span>
        <span className="col-span-2 bg-[#1b1b1c]">PnL</span>
      </div>

      <div className="mt-[13px] grid grid-cols-[141fr_91fr] gap-x-1.5">
        <div>
          <label htmlFor="instrument" className="block">
            Instrument
          </label>
          <div className="relative mt-[5px]">
            <select
              id="instrument"
              disabled
              className="block h-[21px] w-full appearance-none border border-[#848484] bg-[#999999] pl-[5px] text-[#6a6a6a] opacity-100"
            >
              <option>MES 06-25</option>
            </select>
            <Chevron color="#6a6a6a" />
          </div>
        </div>
        <div>
          <label htmlFor="tif" className="block">
            TIF
          </label>
          <div className="relative mt-[5px]">
            <select id="tif" className="block h-[21px] w-full appearance-none bg-[#3f3f46] pl-1.5">
              <option>DAY</option>
            </select>
            <Chevron />
          </div>
        </div>
        <div className="mt-1.5">
          <label htmlFor="account" className="block">
            Account
          </label>
          <div className="relative mt-1.5">
            <select id="account" className="block h-[21px] w-full appearance-none bg-[#3f3f46] pl-1.5">
              <option>PA-APEX-4883-09!...</option>
            </select>
            <Chevron />
          </div>
        </div>
        <div className="mt-1.5">
          <label htmlFor="qty" className="block">
            Order qty
          </label>
          <div className="mt-1.5 flex h-[21px] items-center bg-[#3f3f46] pr-1">
            <input id="qty" defaultValue="1" className="h-full w-full min-w-0 flex-1 bg-transparent pl-[9px] outline-none" />
            <button type="button" aria-label="Calculator">
              <svg width="12" height="14" viewBox="0 0 12 14" fill="#d0d0d0">
                <path d="M.5 1.500h10v2H.5z" fill="none" stroke="#d0d0d0" />
                <path d="M0 5h2v2H0zM3 5h2v2H3zM6 5h2v2H6zM9 5h2v2H9zM0 8h2v2H0zM3 8h2v2H3zM6 8h2v2H6zM9 8h2v2H9zM0 11h2v2H0zM3 11h2v2H3zM6 11h2v2H6zM9 11h2v2H9z" />
              </svg>
            </button>
            <div className="ml-1 flex flex-col gap-1.5">
              <button type="button" aria-label="Increase quantity">
                <svg className="block" width="8" height="4" viewBox="0 0 8 4">
                  <path d="M0 4l4-4 4 4z" fill="#d8d8d8" />
                </svg>
              </button>
              <button type="button" aria-label="Decrease quantity">
                <svg className="block" width="8" height="4" viewBox="0 0 8 4">
                  <path d="M0 0l4 4 4-4z" fill="#d8d8d8" />
                </svg>
              </button>
            </div>
          </div>
        </div>
      </div>

      <label htmlFor="atm" className="mt-[7px] block">
        ATM Strategy
      </label>
      <div className="relative mt-1.5">
        <select id="atm" className="block h-[21px] w-full appearance-none bg-[#3f3f46] pl-9">
          <option>1Q 10 10</option>
        </select>
        <svg className="pointer-events-none absolute left-2.5 top-[5px]" width="4" height="12" viewBox="0 0 4 12" fill="#d8d8d8">
          <path d="M1 0h2v2H1zM0 4h3v7h1v1H0v-1h1V5H0z" />
        </svg>
        <Chevron />
      </div>

      <dl className="mt-[7px] grid grid-cols-[17px_113px_1fr] gap-y-1.5 leading-4">
        <dt>A:</dt>
        <dd>5182.50</dd>
        <dd>9</dd>
        <dt>B:</dt>
        <dd>5182.25</dd>
        <dd>4</dd>
      </dl>
    </aside>
  );
}

export default function App() {
  return (
    <div className="flex h-screen flex-col bg-[#0a0f18] font-['Liberation_Sans',Arial,sans-serif]">
      <div className="flex min-h-0 flex-1 flex-col border border-[#3f3f46] bg-[#2d2d30]">
        <TitleBar />
        <div className="flex min-h-0 flex-1">
          <main className="flex min-w-0 flex-1 flex-col pl-1.5 pt-1.5">
            <div className="grid min-h-0 flex-1 grid-rows-[672fr_204fr_205fr_35px_15px] border border-[#3f3f46] bg-[#030303]">
              <div className="grid min-h-0 border-b border-[#d3d3d3]">
                <PricePanel />
              </div>
              <div className="grid min-h-0 border-b border-[#d3d3d3]">
                <VolumePanel />
              </div>
              <div className="relative grid min-h-0 pb-px">
                <MacdPanel />
                <div className="absolute bottom-0 left-0 right-[89px] h-px bg-[#d3d3d3]" />
              </div>
              <TimeAxis />
              <ScrollStrip />
            </div>
            <Tabs />
          </main>
          <ChartTrader />
        </div>
      </div>
      <footer className="flex h-[5px] shrink-0 flex-col">
        <div className="h-0.5 bg-[#2d2d30]" />
        <div className="mt-px ml-[580px] h-0.5 w-40 bg-[#3a3e44]" />
      </footer>
    </div>
  );
}
